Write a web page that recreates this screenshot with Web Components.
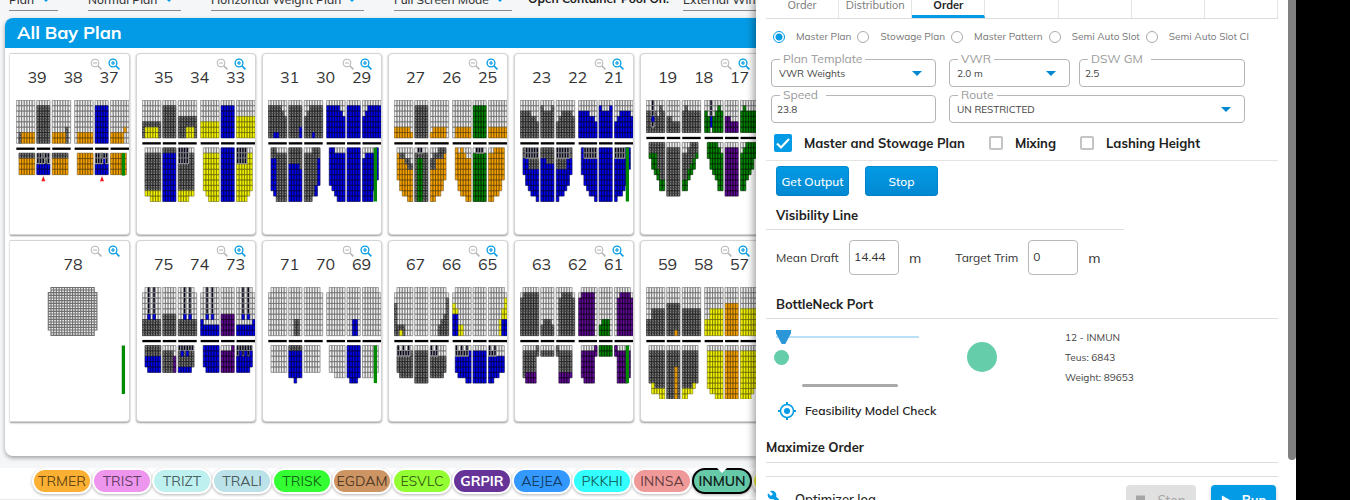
<!DOCTYPE html>
<html lang="en">
<head>
<meta charset="utf-8">
<title>All Bay Plan</title>
<style>
body{margin:0;height:100vh;overflow:hidden;background:#f5f6f8;font-family:Mulish,Muli,Lato,"Noto Sans",sans-serif;font-size:14px;color:#212121}
</style>
</head>
<body>
<stowage-app></stowage-app>
<script>
const BASE = `*{box-sizing:border-box}button,input,select{font:inherit;color:inherit;margin:0}`;
class Base extends HTMLElement {
  connectedCallback() {
    if (this.shadowRoot) return;
    this.attachShadow({mode: 'open'}).innerHTML = `<style>${BASE}${this.css()}</style>${this.html()}`;
  }
  attr(n, d = '') { return this.getAttribute(n) ?? d; }
  css() { return ':host{display:block}'; }
  html() { return '<slot></slot>'; }
}

/* Cell grids. A block is a list of "count:runs" columns; a run is a cell type and its number of rows. */
const BAYS = [
 {n:'39 38 37', rows:8, bar:68, arrows:1,
  deck:['1:g8 1:g6k2 5:g6o2','5:g1k7','5:g6o2 1:g5k3 1:g8','1:g8 6:g6o2','5:g1b7','5:g6o2 1:g5o1g2 1:g8'],
  hold:['1:. 6:k1o3','2:x2b2 1:k1x1b2 1:x1k1b2 1:x2b2','6:k1o3','1:. 6:o4','2:x2b2 1:k1x1b2 1:x1b3 1:x2b2','6:o4']},
 {n:'35 34 33', rows:7,
  deck:['1:g4k3 5:g4k1y2 1:g4k3','5:g1k6','3:g3k4 3:g3k2y2 1:g3k4','7:g4y3','5:g1b6','7:g3y4'],
  hold:['1:. 2:g1k7y1 4:g1k7y2','5:k1b9','4:x3k5y2 2:g1k7y1','1:. 1:g1y7 1:g1y8 4:g1y9','5:b10','4:x3y7 1:g1y8 1:g1y7']},
 {n:'31 30 29', rows:7, bar:163,
  deck:['2:g1k6 2:g1k5b1 1:g1k6 1:g2k5 1:g3k4','4:g1k6 1:g1k4b2','1:g3k4 1:g2k5 1:g1k6 1:g1k5b1 3:g1k6','5:g1b6 1:g2b5 1:g3b4','5:g1b6','1:g3b4 1:g2b5 5:g1b6'],
  hold:['1:. 1:k2b6 1:k2b7 1:g1k9 3:g1k9','4:k3b7 1:k4b6','3:g1k9 1:k9 1:k7b2 1:k2b5','1:. 1:b7 1:b8 1:g1b8 3:g1b9','5:b10','1:g2b8 3:g1b9 1:g1b7 1:b6']},
 {n:'27 26 25', rows:7,
  deck:['6:g5o2 1:g6o1','5:g1k6','1:g6o1 5:g5o2 1:g7','1:g7 6:g5o2','5:g1n6','7:g5o2'],
  hold:['1:. 1:g1o5 1:g1k1o6 1:g1k1o7 1:g2k1o6 1:g2k2o6 1:g3k1o6','1:g1k9 1:x1k1n8 1:x1k1n8 2:g1k9','1:g2k2o6 1:g1k3o6 1:g1k1o7 1:k2o7 1:k2o6 1:k1o5','1:. 1:o6 1:g1o7 1:o9 1:g1o8 2:g2o8','1:g1n9 3:x1n9 1:g1n9','2:g1o9 2:o9 1:o8 1:o6']},
 {n:'23 22 21', rows:7, bar:163,
  deck:['4:g2k5 2:g3k4 1:g4k3','1:g1k6 3:g2k5 1:g1k6','1:g4k3 1:g3k4 4:g2k5 1:g3k4','4:g2b5 2:g3b4 1:g4b3','1:g1b6 3:g2b5 1:g1b6','1:g4b3 1:g3b4 4:g2b5 1:g3b4'],
  hold:['1:. 1:k2b3 1:x2b5 1:x2k2b4 2:x2k2b5 1:x2k2b6','2:k2b8 3:k3b7','1:x2k2b6 2:x2k2b5 1:x2k2b4 1:x2b5 1:k2b3','1:. 1:b5 1:x2b5 1:x2b6 2:x2b7 1:x2b8','5:b10','1:x2b8 2:x2b7 1:x2b6 1:b7 1:b4']},
 {n:'19 18 17', rows:6,
  deck:['2:g2k4 1:x3b1x1k1 1:g2k4 1:g3k3 1:g1k5 1:g2k4','2:g3k3 3:g4k2','1:g2k4 1:g1k5 5:g2k4','1:g2n4 1:g3n3 1:x3b2g1 1:g3n3 1:g2n4 1:g1n5 1:g2n4','2:g3p3 3:g4p2','1:g2n4 1:g1n5 5:g2n4'],
  hold:['1:. 1:k2n1 1:k2n3 1:k2n4 1:k5n2 2:k7n2','5:g1k9','2:g2k5n2 1:g1k4n2 1:k4n2 1:k3n2 1:k2n1','1:. 1:n3 1:n5 1:n6 1:n7 1:g1n8 1:g2n7','5:g1p9','1:g2n7 1:g1n8 1:n7 1:n6 1:n5 1:n3']},
 {n:'78', rows:9, bar:147, dense:1},
 {n:'75 74 73', rows:9,
  deck:['1:.1g5k3 1:g6k3 1:x5b1k3 1:g6k3 1:x5b1k3 2:g6k3','5:g5k4','2:g6k3 1:x5b1k3 1:g6k3 1:x5b1k3 1:g6k3 1:.1g5k3','1:.1g5b3 1:g7b2 1:x5b1g1b2 1:g7b2 1:x5b1g1b2 1:g7b2 1:g7b2','5:g5p4','2:g7b2 1:x5b1g1b2 1:g7b2 1:x5b1g1b2 1:g7b2 1:.1g5b3'],
  hold:['1:. 1:k2b2 5:k2b3','4:g1k4 1:g2p3','1:x1k3b1 1:x1b1k2b1 1:x1k3b1 1:x1b1k2b1 1:x1k3b1 1:x1k3','1:. 1:b4 5:b5','4:g1p4 1:p5','1:x2b3 1:x1b4 1:x2b3 1:x1b4 1:x2b3 1:x1b3']},
 {n:'71 70 69', rows:9, bar:114,
  deck:['1:.1g8 6:g9','2:g9 2:g6k3 1:g9','6:g9 1:.1g8','1:.1g8 6:g9','2:g9 2:g6b3 1:g9','6:g9 1:.1g8'],
  hold:['1:. 6:g5','2:k1b5 1:k1b6 2:k1b5','6:g5','1:. 2:g5 4:g6','1:b6 3:b7 1:b6','4:g6 2:g5']},
 {n:'67 66 65', rows:9,
  deck:['1:.1g2k6 1:g7k2 1:g7k1y1 1:g7k2 3:g9','5:g9','3:g9 1:g7k2 1:g6k3 1:g5k4 1:.1g1k7','1:.1g2y2b4 1:g4y1b4 2:g7y2 3:g9','5:g9','4:g9 1:g6y3 1:g4y2b3 1:.1g1y4b3'],
  hold:['1:. 1:x2k3 1:g1x1k4 1:x2k4 1:g1x1k4 1:x2k4 1:g1k5','5:g1k6','1:x2k4 1:g1x1k4 1:x2k4 2:g2k4 1:g2k3','1:. 1:x2b3 1:g1x1b4 1:x2b4 1:g1x1b4 1:x2b5 1:g1b6','5:g1b6','1:x2b5 1:g1x1b5 1:x2b4 1:g2b4 2:g2b3']},
 {n:'63 62 61', rows:9, bar:114,
  deck:['1:.1g1k7 6:g1k8','1:g7k2 3:g6k3 1:g7k2','1:g9 1:g2k7 4:g1k8 1:.1g1k7','1:.1g1p7 5:g1p8 1:g9','1:g7n2 3:g6n3 1:g9','1:g9 1:g2p7 4:g1p8 1:.1g1p7'],
  hold:['1:. 1:g1k5 4:g1k4p2 1:k2','5:g1k1','1:k2 4:g1k4p2 1:g1k4p1','1:. 1:g1p5 4:g1p6 1:p2','5:n2','1:p2 4:g1p6 1:g1p5']},
 {n:'59 58 57', rows:9,
  deck:['2:g6k3 5:g4k5','3:g3k6 1:g3k5o1 1:g3k6','7:g4k5','2:g6y3 5:g4y5','5:g3o6','7:g4y5'],
  hold:['1:. 1:g1k6 1:g1k6y2 1:g1k7y1 1:g1k7y1 2:g1k7y2','3:g1k9 1:g1k3o6 1:g1k9','2:g1k7y2 2:g1k7y1 1:g1k6y1 1:g1k6','1:. 1:g1y7 2:g1y8 3:g1y9','5:g1o9','2:g1y9 2:g1y9 1:g1y8 1:g1y7']},
];
const FILLS = {g:['#eeeeee','#707070'],k:['#7c7c7c','#222222'],b:['#0000f0','#06064c'],y:['#f2f200','#66660c'],o:['#f7a000','#64480c'],n:['#008800','#042c04'],p:['#600a96','#180428'],x:['#f4f4f4','#777777']};
const BLOCK_X = [0, 62, 109, 177, 239, 286];

class BayDrawing extends Base {
  css() { return ':host{display:block}svg{display:block;width:100%;height:auto}'; }
  html() {
    const bay = BAYS[+this.attr('bay')];
    const cw = 8, ch = 16.3, cells = {};
    const add = (t, x, y, w, h) => (cells[t] ??= []).push([x, y, w, h]);
    const draw = (blocks, top) => blocks.forEach((block, i) => {
      let x = BLOCK_X[i];
      for (const part of block.split(' ')) {
        const [n, runs] = part.split(':');
        for (let c = 0; c < +n; c++, x += cw) {
          let y = top;
          for (const m of runs.matchAll(/([a-z.])(\d+)/g))
            for (let r = 0; r < +m[2]; r++, y += ch) if (m[1] !== '.') add(m[1], x, y, cw, ch);
        }
      }
    });
    const deckEnd = bay.rows * ch, holdTop = deckEnd + 30;
    let out = '';
    if (bay.dense) {
      for (let r = 0; r < 18; r++) for (let c = 0; c < 18; c++) {
        const edge = (c === 0 || c === 17) && (r < 2 || r > 15);
        if (!edge) add('g', 97 + c * 8.2, r * 8.1, 8.2, 8.1);
      }
    } else {
      draw(bay.deck, 0);
      draw(bay.hold, holdTop);
      out += BLOCK_X.map((x, i) => `<rect x="${x}" y="${deckEnd + 13}" width="${i % 3 === 1 ? 41 : 56}" height="7" fill="#000"/>`).join('');
    }
    for (const t in cells) {
      const [fill, line] = FILLS[t];
      const sw = bay.dense ? 3.4 : t === 'y' || t === 'o' ? 1.7 : 2;
      out += `<path fill="${fill}" stroke="${line}" stroke-width="${sw}" d="${cells[t].map(([x, y, w, h]) => `M${x} ${y}h${w}v${h}h${-w}z`).join('')}"/>`;
      if (t === 'k') out += `<path fill="none" stroke="#222" stroke-width="2" d="${cells[t].map(([x, y]) => `M${x + 1} ${y + 5}l6 6`).join('')}"/>`;
      if (t === 'x') out += `<path fill="#08081c" d="${cells[t].map(([x, y]) => `M${x + 1} ${y}h5v14h-5z`).join('')}"/>`;
    }
    if (bay.arrows) out += [82, 260].map(x => `<path fill="#f01818" d="M${x} 230l6 16h-12z"/>`).join('');
    if (bay.bar) out += `<rect x="320" y="${holdTop}" width="10" height="${bay.bar}" fill="#008a00"/>`;
    return `<svg viewBox="-1 -1 343 340" aria-hidden="true">${out}</svg>`;
  }
}
customElements.define('bay-drawing', BayDrawing);

class ZoomButton extends Base {
  css() { return `:host{display:block;color:#039be5}:host([out]){color:#b5b5b5}button{display:block;padding:0;border:0;background:none}svg{display:block;width:12px;height:12px}`; }
  html() {
    const out = this.hasAttribute('out');
    return `<button type="button" aria-label="${out ? 'Zoom out' : 'Zoom in'}"><svg viewBox="0 0 12 12" fill="none" stroke="currentColor"><circle cx="5" cy="5" r="3.9" stroke-width="${out ? 1 : 1.3}"/><path d="M8 8l3.4 3.4" stroke-width="1.6"/><path d="${out ? 'M3 5h4' : 'M3 5h4M5 3v4'}" stroke-width="1.2"/></svg></button>`;
  }
}
customElements.define('zoom-button', ZoomButton);

class BayCard extends Base {
  css() { return `:host{display:block;height:182px;background:#fff;border:1px solid #d4d4d4;border-radius:4px;box-shadow:0 1px 2px rgba(0,0,0,.4);overflow:hidden}
    :host([edge]){border-left:0;border-radius:0 4px 4px 0}
    .zoom{display:flex;justify-content:flex-end;gap:6px;padding:4px 9px 0 0}
    .nums{display:flex;justify-content:center;padding-left:7px;font-size:16px;line-height:14px;height:30px;color:#333}
    .nums span{width:36px;text-align:center}
    bay-drawing{margin-left:6px}:host(:not([edge])) bay-drawing{margin-left:5px}`; }
  html() {
    const i = this.attr('bay');
    return `<div class="zoom"><zoom-button out></zoom-button><zoom-button></zoom-button></div>
      <div class="nums">${BAYS[i].n.split(' ').map(n => `<span>${n}</span>`).join('')}</div><bay-drawing bay="${i}"></bay-drawing>`;
  }
}
customElements.define('bay-card', BayCard);

class BayPlan extends Base {
  css() { return `:host{display:flex;flex-direction:column;flex:1;min-height:0;margin:0 0 0 5px;background:#fff;border-radius:8px 0 0 8px;box-shadow:0 2px 4px rgba(0,0,0,.35);overflow:hidden}
    h1{margin:0;padding:0 12px;font-size:18px;line-height:30px;font-weight:700;color:#fff;background:#039be5}
    .grid{display:grid;grid-template-columns:repeat(6,120px);gap:5px 6px;padding:5px 0 0 5px}`; }
  html() { return `<h1>All Bay Plan</h1><div class="grid">${BAYS.map((b, i) => `<bay-card bay="${i}"${i % 6 ? '' : ' edge'}></bay-card>`).join('')}</div>`; }
}
customElements.define('bay-plan', BayPlan);

class BarSelect extends Base {
  css() { return `:host{display:block;border-bottom:1px solid #8a8a8a}
    .w{display:flex;align-items:center;position:relative}select{appearance:none;border:0;background:none;padding:0;width:100%;height:22px;font-size:12px;color:#333;font-weight:500}
    svg{position:absolute;right:7px;width:10px;height:5px}`; }
  html() { return `<div class="w"><select aria-label="${this.attr('value')}"><option>${this.attr('value')}</option></select><svg viewBox="0 0 10 5"><path d="M0 0h10L5 5z" fill="#039be5"/></svg></div>`; }
}
customElements.define('bar-select', BarSelect);

class TopBar extends Base {
  css() { return `:host{display:flex;align-items:flex-end;height:18px;overflow:hidden;padding:0 0 7px 9px}
    bar-select{flex:none;margin-right:30px}.a{width:49px}.b{width:93px}.c{width:153px}.d{width:118px;margin-right:16px}.e{width:130px}
    b{flex:none;font-weight:700;font-size:12px;line-height:24px;width:155px;white-space:nowrap}`; }
  html() { return `<bar-select class="a" value="Plan"></bar-select><bar-select class="b" value="Normal Plan"></bar-select><bar-select class="c" value="Horizontal Weight Plan"></bar-select><bar-select class="d" value="Full Screen Mode"></bar-select><b>Open Container Pool On:</b><bar-select class="e" value="External Window"></bar-select>`; }
}
customElements.define('top-bar', TopBar);

class PortChip extends Base {
  css() { return `:host{display:block;flex:none;width:60px;position:relative}
    button{display:block;width:60px;height:26px;padding:0;border:2px solid #fff;border-radius:13px;background:var(--c);color:rgba(0,0,0,.62);font-size:14px;line-height:22px;box-shadow:0 1px 3px rgba(0,0,0,.3);white-space:nowrap}
    :host([light]) button{color:#fff;font-weight:700}
    :host([active]) button{border-color:#000;color:#10201a;font-weight:600}
    :host([active])::after{content:"";position:absolute;left:25px;top:0;border:5px solid transparent;border-top-color:#fff;border-bottom:0}`; }
  html() { return `<button type="button"><slot></slot></button>`; }
}
customElements.define('port-chip', PortChip);

const PORTS = [['TRMER','#fbb034'],['TRIST','#ee96ee'],['TRIZT','#bdf0ef'],['TRALI','#bae2e8'],['TRISK','#33ff33'],['EGDAM','#cd9563'],['ESVLC','#94ff33'],['GRPIR','#663399','light'],['AEJEA','#3399ff'],['PKKHI','#33ffff'],['INNSA','#f09999'],['INMUN','#66c9a8','active'],['','#eeee33']];
class PortBar extends Base {
  css() { return `:host{display:block;margin-top:12px;background:#fff}.row{display:flex;padding:0 0 5px 32px;overflow:hidden;border-bottom:1px solid #ececec}`; }
  html() { return `<div class="row">${PORTS.map(([n, c, f = '']) => `<port-chip ${f} style="--c:${c}">${n}</port-chip>`).join('')}</div>`; }
}
customElements.define('port-bar', PortBar);

class TabBar extends Base {
  css() { return `:host{display:flex;height:19px;border-bottom:1px solid #ddd;overflow:hidden;align-items:flex-end}
    a{flex:1;min-width:0;height:30px;border-right:1px solid #e4e4e4;text-align:center;font-size:11px;line-height:34px;color:#777;text-decoration:none}
    a[aria-current]{color:#222;font-weight:700;border-bottom:3px solid #039be5}`; }
  html() { return `<a href="#order">Order</a><a href="#distribution">Distribution</a><a href="#plan" aria-current="page">Order</a><a href="#t4" aria-label="Tab 4"></a><a href="#t5" aria-label="Tab 5"></a><a href="#t6" aria-label="Tab 6"></a><a href="#t7" aria-label="Tab 7"></a>`; }
}
customElements.define('tab-bar', TabBar);

class PlanModes extends Base {
  css() { return `:host{display:flex;gap:6px;padding:11px 0 9px 7px}
    label{display:flex;align-items:center;gap:11px;font-size:10px;line-height:14px;color:#757575;white-space:nowrap}
    input{appearance:none;width:12px;height:12px;border:1px solid #aaa;border-radius:50%}
    input:checked{border:1px solid #039be5;background:radial-gradient(#039be5 3px,#fff 4px)}`; }
  html() { return ['Master Plan','Stowage Plan','Master Pattern','Semi Auto Slot','Semi Auto Slot Cl'].map((t, i) => `<label><input type="radio" name="mode"${i ? '' : ' checked'}>${t}</label>`).join(''); }
}
customElements.define('plan-modes', PlanModes);

class OutlinedField extends Base {
  css() { return `:host{display:block;position:relative}
    fieldset{margin:0;padding:0 7px;height:34px;min-width:0;border:1px solid #b5b5b5;border-radius:4px}
    legend{padding:0 3px;margin-left:1px;font-size:12px;line-height:12px;height:12px;color:#9a9a9a}
    input,select{display:block;width:100%;height:16px;padding:0;border:0;background:none;appearance:none;outline:0;font-size:10px;color:#444}
    fieldset.t{padding:0 5px}.t legend{margin-left:3px;padding-right:8px}
    svg{position:absolute;right:14px;top:18px;width:10px;height:5px}`; }
  html() {
    const v = this.attr('value'), sel = this.hasAttribute('select');
    return `<fieldset class="${sel ? 's' : 't'}"><legend><label for="f">${this.attr('label')}</label></legend>${sel ? `<select id="f"><option>${v}</option></select><svg viewBox="0 0 10 5"><path d="M0 0h10L5 5z" fill="#0288d1"/></svg>` : `<input id="f" value="${v}">`}</fieldset>`;
  }
}
customElements.define('outlined-field', OutlinedField);

class CheckItem extends Base {
  css() { return `:host{display:block}
    label{display:flex;align-items:center;gap:12px;font-weight:700;font-size:13px;line-height:18px;white-space:nowrap}
    input{appearance:none;width:14px;height:14px;border:2px solid #c4c4c4;border-radius:2px}
    input:checked{width:18px;height:18px;border:0;background:#039be5 url('data:image/svg+xml,<svg xmlns="http://www.w3.org/2000/svg" viewBox="0 0 18 18"><path d="M3 9.500l4 4L15 5" fill="none" stroke="white" stroke-width="2.200"/></svg>')}`; }
  html() { return `<label><input type="checkbox"${this.hasAttribute('on') ? ' checked' : ''}>${this.attr('label')}</label>`; }
}
customElements.define('check-item', CheckItem);

class SectionTitle extends Base {
  css() { return `:host{display:block;border-bottom:1px solid #ddd}h2{margin:0;font-size:13px;line-height:20px;font-weight:700;color:#222}`; }
  html() { return `<h2><slot></slot></h2>`; }
}
customElements.define('section-title', SectionTitle);

class MetreField extends Base {
  css() { return `:host{display:flex;align-items:center;font-size:14px;line-height:18px;color:#333}
    label{font-size:12px;width:73px;white-space:nowrap}input{width:50px;height:35px;padding:0 4px 2px;border:1px solid #b8b8b8;border-radius:4px;font-size:12px}span{margin-left:10px}`; }
  html() { return `<label for="m">${this.attr('label')}</label><input id="m" value="${this.attr('value')}"><span>m</span>`; }
}
customElements.define('metre-field', MetreField);

class ActionButton extends Base {
  css() { return `:host{display:block}button{display:flex;align-items:center;justify-content:center;gap:12px;width:73px;height:30px;padding:0;border:0;border-radius:4px;background:linear-gradient(#039be5,#0288d1);box-shadow:inset 0 0 0 1px rgba(2,119,189,.5);color:#fff;font-size:12px;font-weight:500;white-space:nowrap}
    :host([wide]) button{width:65px;font-weight:700;font-size:13px;box-shadow:0 2px 4px rgba(0,0,0,.2);background:#039be5}
    :host([wide][off]) button{width:70px;background:#e0e0e0;color:#a6a6a6;font-weight:500;box-shadow:none}::slotted(svg){flex:none;width:9px;height:10px}`; }
  html() { return `<button type="button"><slot></slot></button>`; }
}
customElements.define('action-button', ActionButton);

class BottleNeck extends Base {
  css() { return `:host{display:grid;grid-template-columns:191px 98px 1fr;padding:9px 0 0 10px;height:78px}
    .s{display:flex;flex-direction:column}
    input{appearance:none;display:block;width:143px;height:18px;background:linear-gradient(#bbe0f8,#bbe0f8) 0 8px/100% 2px no-repeat;outline:0}
    input::-webkit-slider-thumb{appearance:none;width:15px;height:14px;background:#2c97d8;clip-path:polygon(0 0,100% 0,100% 24%,62% 100%,38% 100%,0 24%)}
    .dot{width:15px;height:15px;border-radius:50%;background:#66cdaa;margin:4px 0 0 -2px}
    .bar{width:96px;height:3px;border-radius:2px;background:#a9a9a9;margin:19px 0 0 26px}
    .big{width:30px;height:30px;border-radius:50%;background:#66cdaa;margin-top:14px}
    p{margin:0;font-size:10px;line-height:20px;color:#444}`; }
  html() { return `<div class="s"><input type="range" min="0" max="100" value="0" aria-label="Bottleneck port"><i class="dot"></i><i class="bar"></i></div><i class="big"></i><div><p>12 - INMUN</p><p>Teus: 6843</p><p>Weight: 89653</p></div>`; }
}
customElements.define('bottle-neck', BottleNeck);

class OrderPanel extends Base {
  css() { return `:host{display:flex;background:#fff;box-shadow:-2px 0 8px rgba(0,0,0,.4);overflow:hidden;clip-path:inset(0 0 0 -12px)}
    .body{flex:1;min-width:0;padding:0 10px}.thumb{width:8px;height:92%;background:#808080;border-radius:0 0 4px 4px}
    .fields{display:grid;grid-template-columns:165px 13px 121px 9px 166px;row-gap:2px;padding-left:5px}
    .f1,.f4{grid-column:1}.f2{grid-column:3}.f3{grid-column:5}.f5{grid-column:3/6}
    .checks{display:flex;gap:24px;padding:11px 0 8px 8px;border-bottom:1px solid #e4e4e4}
    .btns{display:flex;gap:16px;padding:5px 10px 9px}
    section-title.in{padding:0 10px 4px}section-title.short{margin-right:30%}
    .draft{display:flex;gap:34px;padding:10px 0 19px 10px}
    .feas{display:flex;align-items:center;gap:9px;padding-left:12px;font-size:12px;line-height:28px;font-weight:600}
    .feas svg{width:18px;height:18px}
    section-title.max{padding:12px 0 5px}
    .line{height:14px;border-bottom:1px solid #ddd}
    .foot{display:flex;align-items:flex-start;padding:8px 2px 0 0;line-height:28px}.foot svg.w{width:16px;height:16px;margin:5px 0 0 1px}
    .foot span{flex:1;margin-left:12px;font-size:13px;font-weight:500}.foot action-button{margin-left:15px}`; }
  html() { return `<div class="body"><tab-bar></tab-bar><plan-modes></plan-modes>
    <div class="fields"><outlined-field class="f1" select label="Plan Template" value="VWR Weights"></outlined-field><outlined-field class="f2" select label="VWR" value="2.0 m"></outlined-field><outlined-field class="f3" label="DSW GM" value="2.5"></outlined-field><outlined-field class="f4" label="Speed" value="23.8"></outlined-field><outlined-field class="f5" select label="Route" value="UN RESTRICTED"></outlined-field></div>
    <div class="checks"><check-item on label="Master and Stowage Plan"></check-item><check-item label="Mixing"></check-item><check-item label="Lashing Height"></check-item></div>
    <div class="btns"><action-button>Get Output</action-button><action-button>Stop</action-button></div>
    <section-title class="in short">Visibility Line</section-title>
    <div class="draft"><metre-field label="Mean Draft" value="14.44"></metre-field><metre-field label="Target Trim" value="0"></metre-field></div>
    <section-title class="in">BottleNeck Port</section-title><bottle-neck></bottle-neck>
    <div class="feas"><svg viewBox="0 0 18 18" fill="none" stroke="#039be5" stroke-width="1.500"><circle cx="9" cy="9" r="6.500"/><circle cx="9" cy="9" r="3" fill="#039be5" stroke="none"/><path d="M9 0v3M9 15v3M0 9h3M15 9h3" stroke-width="2"/></svg>Feasibility Model Check</div>
    <section-title class="max">Maximize Order</section-title><div class="line"></div>
    <div class="foot"><svg class="w" viewBox="0 0 24 24" fill="#039be5"><path d="M22.700 19l-9.100-9.100c.900-2.300.400-5-1.500-6.900-2-2-5-2.400-7.400-1.300L9 6 6 9 1.600 4.700C.400 7.100.900 10.100 2.900 12.100c1.900 1.900 4.600 2.400 6.900 1.500l9.100 9.100c.400.400 1 .400 1.400 0l2.300-2.300c.500-.400.500-1.100.100-1.400z"/></svg><span>Optimizer log</span>
    <action-button wide off><svg viewBox="0 0 10 10"><path d="M0 0h10v10H0z" fill="#a6a6a6"/></svg>Stop</action-button><action-button wide><svg viewBox="0 0 10 10"><path d="M1 0l9 5-9 5z" fill="#fff"/></svg>Run</action-button></div>
    </div><div class="thumb"></div>`; }
}
customElements.define('order-panel', OrderPanel);

class StowageApp extends Base {
  css() { return `:host{display:flex;height:100vh;overflow:hidden}
    main{flex:1;min-width:0;display:flex;flex-direction:column;overflow:hidden;height:100%}
    order-panel{width:40%;position:relative}.rail{width:4%;background:#000;position:relative}`; }
  html() { return `<main><top-bar></top-bar><bay-plan></bay-plan><port-bar></port-bar></main><order-panel></order-panel><div class="rail"></div>`; }
}
customElements.define('stowage-app', StowageApp);
</script>
</body>
</html>
